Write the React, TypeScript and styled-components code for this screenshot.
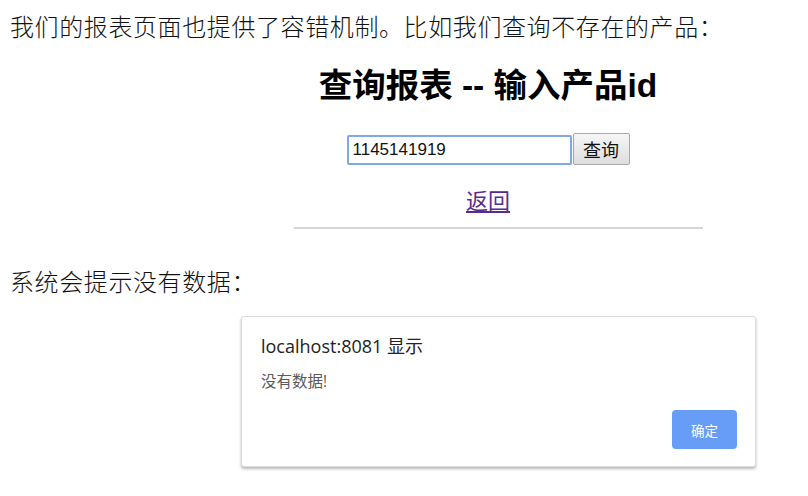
import styled, { createGlobalStyle } from "styled-components";

const GlobalStyle = createGlobalStyle`
  html, body {
    margin: 0;
    padding: 0;
    background: #ffffff;
  }
  body {
    font-family: "Liberation Serif", "Noto Sans CJK SC", serif;
    color: #000;
  }
`;

const Page = styled.div`
  width: 808px;
  height: 496px;
  padding: 0 10px;
  box-sizing: border-box;
  overflow: hidden;
`;

const Para = styled.p<{ $top: number }>`
  margin: ${(p) => p.$top}px 0 0 0;
  font-size: 24px;
  line-height: 26px;
  font-weight: 300;
  color: #111;
  letter-spacing: 0.6px;
`;

const Shot = styled.div`
  margin-left: 263px;
  width: 430px;
  font-family: "Liberation Sans", "Noto Sans CJK SC", sans-serif;
`;

const Heading = styled.h2`
  margin: 25px 0 0 0;
  text-align: center;
  font-size: 33.5px;
  line-height: 40px;
  font-weight: 700;
  color: #000;
  white-space: nowrap;
`;

const SearchRow = styled.div`
  margin-top: 27px;
  display: flex;
  justify-content: center;
  align-items: flex-end;
`;

const IdInput = styled.input`
  width: 225px;
  height: 30px;
  box-sizing: border-box;
  border: 2px solid #7ea8e6;
  border-radius: 2px;
  padding: 0 4px;
  font-family: "Liberation Sans", sans-serif;
  font-size: 17px;
  color: #111;
  outline: none;
`;

const QueryButton = styled.button`
  width: 57px;
  height: 32px;
  margin-left: 1px;
  box-sizing: border-box;
  border: 1px solid #a8a8a8;
  border-radius: 2px;
  background: linear-gradient(#f6f6f6, #dedede);
  font-family: "Noto Sans CJK SC", sans-serif;
  font-size: 18px;
  color: #111;
  padding: 0;
`;

const LinkRow = styled.div`
  margin-top: 22px;
  text-align: center;
  line-height: 30px;
`;

const BackLink = styled.a`
  font-size: 22px;
  color: #5b2a91;
  text-decoration: underline;
  text-underline-offset: 2px;
`;

const Rule = styled.div`
  margin: 8px 0 0 21px;
  width: 409px;
  height: 2px;
  background: #d6d6d6;
`;

const Dialog = styled.div`
  margin: 20px 0 0 231px;
  width: 515px;
  height: 151px;
  box-sizing: border-box;
  border: 1px solid #dcdcdc;
  border-radius: 3px;
  box-shadow: 0 2px 3px rgba(0, 0, 0, 0.28);
  background: #fff;
  padding: 17px 18px 17px 19px;
  display: flex;
  flex-direction: column;
  font-family: "Open Sans", "Noto Sans CJK SC", sans-serif;
`;

const DialogTitle = styled.div`
  font-size: 18px;
  line-height: 24px;
  color: #222;
`;

const DialogMessage = styled.div`
  margin-top: 13px;
  font-size: 15.5px;
  line-height: 20px;
  color: #5a5a5a;
`;

const DialogActions = styled.div`
  margin-top: auto;
  display: flex;
  justify-content: flex-end;
`;

const OkButton = styled.button`
  width: 65px;
  height: 39px;
  border: none;
  border-radius: 4px;
  background: #679df6;
  color: #fff;
  font-family: "Noto Sans CJK SC", sans-serif;
  font-size: 13.5px;
  padding: 0;
`;

export default function App() {
  return (
    <>
      <GlobalStyle />
      <Page>
        <Para $top={15}>
          我们的报表页面也提供了容错机制。比如我们查询不存在的产品：
        </Para>
        <Shot>
          <Heading>查询报表 -- 输入产品id</Heading>
          <SearchRow>
            <IdInput defaultValue="1145141919" />
            <QueryButton>查询</QueryButton>
          </SearchRow>
          <LinkRow>
            <BackLink href="#">返回</BackLink>
          </LinkRow>
          <Rule />
        </Shot>
        <Para $top={41}>系统会提示没有数据：</Para>
        <Dialog>
          <DialogTitle>localhost:8081 显示</DialogTitle>
          <DialogMessage>没有数据!</DialogMessage>
          <DialogActions>
            <OkButton>确定</OkButton>
          </DialogActions>
        </Dialog>
      </Page>
    </>
  );
}
